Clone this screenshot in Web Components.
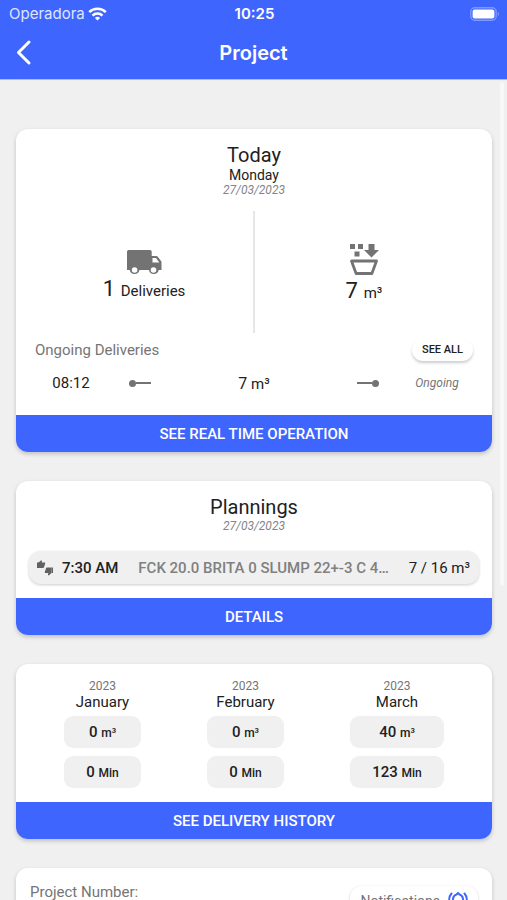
<!DOCTYPE html>
<html lang="en">
<head>
<meta charset="utf-8">
<meta name="viewport" content="width=device-width, initial-scale=1">
<title>Project</title>
<style>
  :root {
    --blue: #3f65ff;
    --page: #f0f0f0;
    --ink: #212121;
    --muted: #757575;
  }
  html, body { height: 100%; margin: 0; }
  body { background: var(--page); color: var(--ink); font-family: Roboto, "Liberation Sans", sans-serif; }
</style>
</head>
<body>
<project-screen></project-screen>
<script>
const define = (name, html) => {
  const template = document.createElement('template');
  template.innerHTML = html;
  customElements.define(name, class extends HTMLElement {
    constructor() {
      super();
      this.attachShadow({ mode: 'open' }).append(template.content.cloneNode(true));
    }
  });
};

define('status-bar', `
<style>
  :host { display: grid; grid-template-columns: 1fr auto 1fr; align-items: center; height: 28px; padding: 0 7px 0 9px; font: 15px/28px Inter, sans-serif; color: #fff; }
  .left { display: flex; align-items: center; gap: 3px; color: #dfe5ff; }
  .time { font-weight: 600; }
  .battery { justify-self: end; }
  svg { display: block; }
</style>
<span class="left"><span>Operadora</span>
  <svg width="19" height="14" viewBox="0 0 19 14" fill="none" stroke="#fff" stroke-width="2.5" aria-hidden="true"><path d="M1.2 5.2a12 12 0 0 1 16.6 0M4.5 8.6a7.2 7.2 0 0 1 10 0"/><path d="M9.5 13.6 6.9 11a3.8 3.8 0 0 1 5.2 0z" fill="#fff" stroke="none"/></svg>
</span>
<span class="time">10:25</span>
<svg class="battery" width="30" height="14" viewBox="0 0 30 14" aria-hidden="true"><rect x=".8" y=".8" width="25.4" height="12.4" rx="4" fill="none" stroke="#7f98ff" stroke-width="1.4"/><rect x="2.6" y="2.6" width="21.8" height="8.8" rx="2" fill="#fff"/><path d="M27.8 5a2.2 2.2 0 0 1 0 4z" fill="#7f98ff"/></svg>
`);

define('nav-bar', `
<style>
  :host { display: grid; grid-template-columns: 1fr auto 1fr; align-items: center; height: 50px; padding: 0 12px 1px; font: 600 20px/28px Inter, sans-serif; color: #fff; }
  button { width: 24px; height: 32px; padding: 0; border: 0; background: none; color: inherit; }
  svg { display: block; }
  h1 { margin: 0; font: inherit; }
</style>
<button type="button" aria-label="Back"><svg width="24" height="32" viewBox="0 0 24 32" fill="none" stroke="currentColor" stroke-width="3" stroke-linecap="round" stroke-linejoin="round"><path d="M17 5 6.5 15.5 17 26"/></svg></button>
<h1><slot></slot></h1>
`);

define('action-card', `
<style>
  :host { display: block; border-radius: 12px; background: #fff; box-shadow: 0 2px 4px rgb(0 0 0 / .2); overflow: hidden; }
</style>
<slot></slot><slot name="action"></slot>
`);

define('card-action', `
<style>
  :host { display: block; }
  button { display: block; width: 100%; height: 37px; padding: 1px 0 0; border: 0; background: var(--blue); color: #fff; font: 500 15px/36px Roboto, sans-serif; text-transform: uppercase; }
</style>
<button type="button"><slot></slot></button>
`);

define('card-heading', `
<style>
  :host { display: flex; flex-direction: column; align-items: center; }
  h2 { margin: 0; font-size: 20px; font-weight: 400; line-height: 24px; }
  ::slotted([slot=day]) { font-size: 14px; line-height: 16px; }
  ::slotted([slot=date]) { font-size: 12px; line-height: 14px; font-style: italic; color: #858585; }
</style>
<h2><slot></slot></h2><slot name="day"></slot><slot name="date"></slot>
`);

define('big-stat', `
<style>
  :host { display: flex; flex-direction: column; align-items: center; padding-top: 32px; font-size: 15px; line-height: 28px; }
  ::slotted(svg) { display: block; color: #737373; }
  ::slotted(b) { font-size: 22px; font-weight: 400; margin-right: 2px; }
  p { margin: 0; }
</style>
<slot name="icon"></slot><p><slot></slot></p>
`);

define('track-line', `
<style>
  :host { display: flex; align-items: center; color: #737373; }
  :host([end]) { flex-direction: row-reverse; }
  i { width: 7px; height: 7px; border-radius: 50%; background: currentColor; }
  i + i { width: 15px; height: 2px; border-radius: 0; }
</style>
<i></i><i></i>
`);

define('today-card', `
<style>
  .body { padding: 14px 19px 10px; }
  .stats { display: grid; grid-template-columns: 1fr 2px 1fr; height: 122px; margin: 14px 0 6px; }
  .rule { background: #e6e6e6; }
  .head { display: flex; justify-content: space-between; align-items: center; font-size: 15px; color: var(--muted); height: 22px; }
  .head button { width: 61px; height: 22px; border: 0; padding: 0; border-radius: 11px; background: #fff; box-shadow: 0 2px 3px rgb(0 0 0 / .2); color: var(--ink); font: 500 11px/22px Roboto, sans-serif; }
  .row { display: grid; grid-template-columns: 12fr 11fr 27fr 11fr 12fr; place-items: center; height: 44px; font-size: 15px; }
  .row b { font-size: 16px; font-weight: 400; }
  .row em { font-size: 12px; color: var(--muted); }
</style>
<action-card>
  <div class="body">
    <card-heading>Today<span slot="day">Monday</span><span slot="date">27/03/2023</span></card-heading>
    <div class="stats">
      <big-stat><svg slot="icon" width="36" height="32" viewBox="0 0 36 32" aria-hidden="true"><path fill="currentColor" d="M2.5 7H24a1.700 1.700 0 0 1 1.700 1.700V13h4.500q1 0 1.600.8l3.400 4.500q.3.500.3 1V27h-2.800a5 5 0 0 1-9.800 0H13.500a5 5 0 0 1-9.800 0H1V8.700A1.700 1.700 0 0 1 2.500 7z"/><g fill="#fff"><path d="M26.500 15H30l3.300 4.400h-6.800z"/><circle cx="8.600" cy="27" r="2.800"/><circle cx="27.500" cy="27" r="2.800"/></g></svg><b>1</b> Deliveries</big-stat>
      <span class="rule"></span>
      <big-stat><svg slot="icon" width="30" height="34" viewBox="0 0 30 34" aria-hidden="true"><g fill="currentColor"><path d="M1 1h5v5H1zM9 1h5v5H9zM5.500 8.500h5v5h-5zM19.500 1h6v6H30l-7.500 7.500L15 7h4.500z"/></g><path d="M2.500 18h25l-4.600 12.500H7.100z" fill="none" stroke="currentColor" stroke-width="2.800" stroke-linejoin="round"/></svg><b>7</b> m³</big-stat>
    </div>
    <div class="head"><span>Ongoing Deliveries</span><button type="button">SEE ALL</button></div>
    <div class="row"><span>08:12</span><track-line></track-line><span><b>7</b> m³</span><track-line end></track-line><em>Ongoing</em></div>
  </div>
  <card-action slot="action">See real time operation</card-action>
</action-card>
`);

define('plannings-card', `
<style>
  .body { padding: 14px 13px; }
  .plan { display: flex; align-items: center; height: 33px; margin-top: 18px; padding: 0 9px 0 8px; border-radius: 12px; background: var(--page); box-shadow: 0 1px 3px rgb(0 0 0 / .2); font-size: 15px; font-weight: 500; }
  svg { flex: none; margin-right: 9px; color: #616161; }
  time { flex: none; margin-right: 20px; }
  .mix { flex: 1; min-width: 0; overflow: hidden; text-overflow: ellipsis; white-space: nowrap; color: #808080; }
  .amount { flex: none; margin-left: 16px; font-weight: 400; }
</style>
<action-card>
  <div class="body">
    <card-heading>Plannings<span slot="date">27/03/2023</span></card-heading>
    <div class="plan">
      <svg width="16" height="16" viewBox="0 0 16 16" fill="currentColor" aria-hidden="true"><path d="M0 2.500h1.800v5.500H0zM1.500 2.500 4.200.3l.9.700-.4 1.500h2.700c.7 0 1 .5.800 1.100L7 7.300q-.2.700-.9.700H2.500q-1 0-1-1z"/><path d="M16 7.500h-1.800V13H16zM14.500 13l-2.700 2.500-.9-.7.4-1.800H8.600c-.7 0-1-.5-.8-1.100L9 8.200q.2-.7.900-.7h3.600q1 0 1 1z"/></svg>
      <time>7:30 AM</time><span class="mix">FCK 20.0 BRITA 0 SLUMP 22+-3 C 4…</span><span class="amount">7 / 16 m³</span>
    </div>
  </div>
  <card-action slot="action">Details</card-action>
</action-card>
`);

define('month-stat', `
<style>
  :host { display: flex; flex-direction: column; align-items: stretch; text-align: center; }
  ::slotted([slot=year]) { font-size: 12px; line-height: 14px; color: var(--muted); }
  .name { font-size: 15px; line-height: 18px; margin-bottom: 5px; }
  .chip { height: 32px; border-radius: 9px; background: var(--page); font-size: 15px; font-weight: 500; line-height: 32px; padding: 0 22px; }
  .chip + .chip { margin-top: 8px; }
</style>
<slot name="year"></slot><span class="name"><slot></slot></span>
<span class="chip"><slot name="volume"></slot></span><span class="chip"><slot name="minutes"></slot></span>
`);

define('history-card', `
<style>
  .months { display: flex; justify-content: space-around; padding: 15px 15px 14px; }
  small { font-size: 12px; }
</style>
<action-card>
  <div class="months">
    <month-stat><span slot="year">2023</span>January<span slot="volume">0 <small>m³</small></span><span slot="minutes">0 <small>Min</small></span></month-stat>
    <month-stat><span slot="year">2023</span>February<span slot="volume">0 <small>m³</small></span><span slot="minutes">0 <small>Min</small></span></month-stat>
    <month-stat><span slot="year">2023</span>March<span slot="volume">40 <small>m³</small></span><span slot="minutes">123 <small>Min</small></span></month-stat>
  </div>
  <card-action slot="action">See delivery history</card-action>
</action-card>
`);

define('details-card', `
<style>
  .body { display: flex; justify-content: space-between; align-items: flex-start; padding: 14px 14px 40px; font-size: 15px; line-height: 20px; color: var(--muted); }
  button { display: flex; align-items: center; gap: 8px; height: 30px; margin-top: 4px; padding: 0 10px; border: 0; border-radius: 12px; background: #fff; box-shadow: 0 1px 3px rgb(0 0 0 / .2); color: inherit; font: 14px/30px Roboto, sans-serif; }
</style>
<action-card>
  <div class="body"><span>Project Number:</span>
    <button type="button">Notifications<svg width="20" height="22" viewBox="0 0 20 22" fill="none" stroke="var(--blue)" stroke-width="2" stroke-linecap="round" stroke-linejoin="round" aria-hidden="true"><path d="M5 16V9.500C5 6.500 7 5 8.500 4.500L10 3l1.500 1.500C13 5 15 6.500 15 9.500V16M3.500 16.500h13M8.500 20h3M3.500 3.500Q1.200 6 1.200 9.500M16.500 3.500q2.300 2.500 2.300 6"/></svg></button>
  </div>
</action-card>
`);

define('project-screen', `
<style>
  :host { display: flex; flex-direction: column; height: 100vh; position: relative; }
  header { flex: none; background: var(--blue); border-bottom: 1px solid #a9bbff; }
  main { flex: 1; min-height: 0; overflow-y: auto; scrollbar-width: none; }
  .list { display: grid; gap: 29px; padding: 49px 15px 49px 16px; }
  .thumb { position: absolute; right: 3px; top: 82px; width: 4px; height: 56%; border-radius: 2px; background: #f8f8f8; }
</style>
<header><status-bar></status-bar><nav-bar>Project</nav-bar></header>
<main><div class="list">
  <today-card></today-card>
  <plannings-card></plannings-card>
  <history-card></history-card>
  <details-card></details-card>
</div></main>
<div class="thumb"></div>
`);
</script>
</body>
</html>
